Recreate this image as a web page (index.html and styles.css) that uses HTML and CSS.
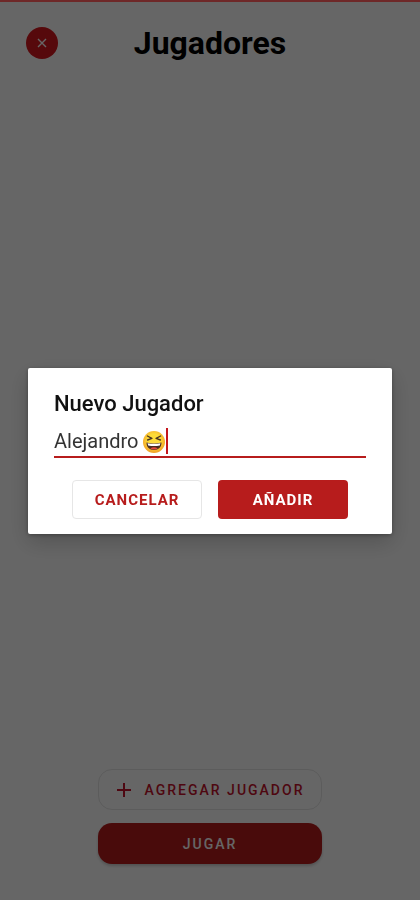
FILE: index.html
```html
<!DOCTYPE html>
<html lang="es">
<head>
<meta charset="utf-8">
<meta name="viewport" content="width=device-width, initial-scale=1">
<title>Jugadores</title>
<link rel="stylesheet" href="styles.css">
</head>
<body>
<div class="screen">
  <header class="header">
    <button class="close" type="button" aria-label="Cerrar">
      <svg width="10" height="10" viewBox="0 0 10 10" aria-hidden="true"><path d="M1 1l8 8M9 1L1 9" fill="none" stroke="currentColor" stroke-width="1.4"/></svg>
    </button>
    <h1 class="title">Jugadores</h1>
  </header>
  <main class="players"></main>
  <footer class="actions">
    <button class="action action-outline" type="button">
      <svg width="16" height="16" viewBox="0 0 16 16" aria-hidden="true"><path d="M8 1v14M1 8h14" fill="none" stroke="currentColor" stroke-width="2"/></svg>
      <span>AGREGAR JUGADOR</span>
    </button>
    <button class="action action-solid" type="button">JUGAR</button>
  </footer>
</div>
<div class="overlay">
  <form class="dialog" role="dialog" aria-labelledby="dialog-title">
    <label class="dialog-title" id="dialog-title" for="player">Nuevo Jugador</label>
    <div class="field">
      <input class="field-input" id="player" type="text" value="Alejandro" autocomplete="off" spellcheck="false">
      <svg class="emoji" width="24" height="24" viewBox="0 0 24 24" aria-hidden="true">
        <defs><radialGradient id="face" cx="50%" cy="42%" r="56%"><stop offset="0.5" stop-color="#fddb38"/><stop offset="1" stop-color="#f2a227"/></radialGradient></defs>
        <circle cx="12" cy="12" r="11" fill="url(#face)"/>
        <path d="M5.4 6l4.5 2.4L5.6 10M18.6 6l-4.5 2.4 4.3 1.6" fill="none" stroke="#4a3522" stroke-width="1.4" stroke-linecap="round" stroke-linejoin="round"/>
        <path d="M4.5 12.5q7.500 1.800 15 0c0 4.700-3 7.500-7.500 7.500s-7.500-2.800-7.500-7.500z" fill="#4a2b20"/>
        <path d="M5.500 13.200q6.500 1.300 13 0l-.7 2.300q-5.800 1-11.600 0z" fill="#fff"/>
        <path d="M8.200 18.600q3.800-2.600 7.600 0-3.800 2-7.600 0z" fill="#e5483b"/>
      </svg>
      <span class="caret"></span>
    </div>
    <div class="dialog-actions">
      <button class="btn btn-outline" type="button">CANCELAR</button>
      <button class="btn btn-solid" type="button">AÑADIR</button>
    </div>
  </form>
</div>
</body>
</html>
```
FILE: styles.css
```css
* {
  box-sizing: border-box;
}

body {
  margin: 0;
  background: #fff;
  color: #000;
  font-family: Roboto, "Liberation Sans", sans-serif;
}

button {
  display: flex;
  align-items: center;
  justify-content: center;
  padding: 0;
  border: 0;
  font-family: inherit;
  font-weight: 500;
  letter-spacing: 1px;
}

.screen {
  display: flex;
  flex-direction: column;
  min-height: 100vh;
}

.header {
  display: grid;
  grid-template-columns: 32px 1fr 32px;
  align-items: center;
  padding: 24px 26px 0;
}

.close {
  width: 32px;
  height: 32px;
  border-radius: 50%;
  background: #d8181f;
  color: #fff;
}

.title {
  margin: 0;
  font-size: 32px;
  font-weight: 700;
  line-height: 38px;
  text-align: center;
}

.players {
  flex: 1;
}

.actions {
  display: flex;
  flex-direction: column;
  align-items: center;
  gap: 13px;
  padding-bottom: 36px;
}

.action {
  width: 224px;
  height: 41px;
  border-radius: 14px;
  font-size: 14px;
  letter-spacing: 2px;
}

.action-outline {
  gap: 13px;
  border: 1px solid #e6e6e6;
  background: #fff;
  color: #c4122c;
}

.action-solid {
  background: #b71c1c;
  color: #fff;
  box-shadow: 0 2px 3px rgba(0, 0, 0, 0.2);
}

.overlay {
  position: fixed;
  inset: 0;
  display: flex;
  align-items: center;
  padding: 0 28px;
  border-top: 2px solid #6e2828;
  background: rgba(0, 0, 0, 0.6);
}

.dialog {
  flex: 1;
  padding: 22px 26px 15px;
  border-radius: 2px;
  background: #fff;
  box-shadow: 0 8px 22px rgba(0, 0, 0, 0.2), 0 1px 4px rgba(0, 0, 0, 0.3);
}

.dialog-title {
  display: block;
  color: #111;
  font-size: 22px;
  font-weight: 500;
  line-height: 28px;
}

.field {
  display: flex;
  align-items: flex-end;
  height: 40px;
  padding-bottom: 2px;
  border-bottom: 2px solid #b71c1c;
}

.field-input {
  field-sizing: content;
  min-width: 0;
  max-width: 100%;
  padding: 0;
  border: 0;
  outline: 0;
  background: transparent;
  color: #333;
  font-family: inherit;
  font-size: 20px;
  line-height: 26px;
}

.emoji {
  flex: none;
  margin-left: 3px;
}

.caret {
  width: 2px;
  height: 26px;
  background: #c4161c;
}

.dialog-actions {
  display: flex;
  justify-content: center;
  gap: 16px;
  margin-top: 22px;
}

.btn {
  width: 130px;
  height: 39px;
  border-radius: 4px;
  font-size: 15px;
  font-weight: 700;
}

.btn-outline {
  border: 1px solid #e6e6e6;
  background: #fff;
  color: #b71c1c;
}

.btn-solid {
  background: #b71c1c;
  color: #fff;
}
```
